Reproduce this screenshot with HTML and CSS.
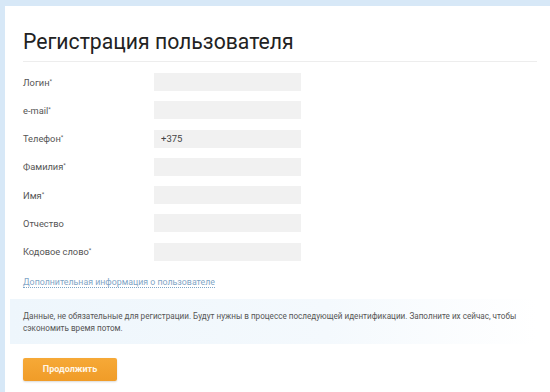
FILE: index.html
```html
<!DOCTYPE html>
<html lang="ru">
<head>
    <meta charset="UTF-8">
    <title>Регистрация пользователя</title>
    <link rel="stylesheet" href="styles.css">
</head>
<body>
    <div class="card">
        <h1 class="title">Регистрация пользователя</h1>

        <form class="reg-form">
            <div class="row">
                <label>Логин<sup>*</sup></label>
                <input type="text">
            </div>
            <div class="row">
                <label>e-mail<sup>*</sup></label>
                <input type="text">
            </div>
            <div class="row">
                <label>Телефон<sup>*</sup></label>
                <input type="text" value="+375">
            </div>
            <div class="row">
                <label>Фамилия<sup>*</sup></label>
                <input type="text">
            </div>
            <div class="row">
                <label>Имя<sup>*</sup></label>
                <input type="text">
            </div>
            <div class="row">
                <label>Отчество</label>
                <input type="text">
            </div>
            <div class="row">
                <label>Кодовое слово<sup>*</sup></label>
                <input type="text">
            </div>
        </form>

        <div class="more">
            <a href="#" class="more-link">Дополнительная информация о пользователе</a>
        </div>

        <div class="note">
            Данные, не обязательные для регистрации. Будут нужны в процессе последующей идентификации. Заполните их сейчас, чтобы сэкономить время потом.
        </div>

        <button class="btn">Продолжить</button>
    </div>
</body>
</html>
```

FILE: styles.css
```css
/* Base */
body {
    margin: 0;
    padding: 6px 0 0 5px;
    height: 392px;
    box-sizing: border-box;
    overflow: hidden;
    background-color: #d7e8f7;
    font-family: Roboto, 'Liberation Sans', sans-serif;
    color: #555;
}

.card {
    background: #fff;
    height: 100%;
    padding: 20px 13px 0 18px;
    box-sizing: border-box;
}

.title {
    margin: 0;
    padding: 4px 0 7px;
    font-size: 21.2px;
    line-height: 24px;
    font-weight: 400;
    color: #222;
    border-bottom: 1px solid #ededed;
}

/* Form rows */
.reg-form {
    padding-top: 11px;
}

.row {
    display: flex;
    align-items: center;
    height: 18px;
    margin-bottom: 10.3px;
}

.row label {
    width: 131px;
    font-size: 9.3px;
    color: #555;
}

.row sup {
    font-size: 6px;
    vertical-align: 3px;
}

.row input {
    width: 147px;
    height: 18px;
    box-sizing: border-box;
    border: none;
    background: #f1f1f1;
    padding: 0 7px;
    font-family: Roboto, 'Liberation Sans', sans-serif;
    font-size: 9.5px;
    color: #444;
    outline: none;
}

/* Additional info */
.more {
    margin-top: 16px;
    font-size: 8.8px;
}

.more-link {
    color: #7fa5c6;
    text-decoration: none;
    border-bottom: 1px dotted #7fa5c6;
}

.note {
    margin: 12px 0 0 -13px;
    padding: 11px 2px 10px 13px;
    font-size: 8.15px;
    line-height: 12px;
    color: #555;
    background: linear-gradient(to right, #eef6fc 0%, #f4f9fd 60%, #ffffff 100%);
}

.btn {
    margin-top: 14px;
    width: 94px;
    height: 23px;
    border: none;
    border-radius: 2px;
    background: linear-gradient(#f6a937, #f09c28);
    color: #fff6e6;
    font-family: Roboto, 'Liberation Sans', sans-serif;
    font-size: 9px;
    font-weight: bold;
    box-shadow: 0 1px 2px rgba(0, 0, 0, 0.15);
    cursor: pointer;
}
```
